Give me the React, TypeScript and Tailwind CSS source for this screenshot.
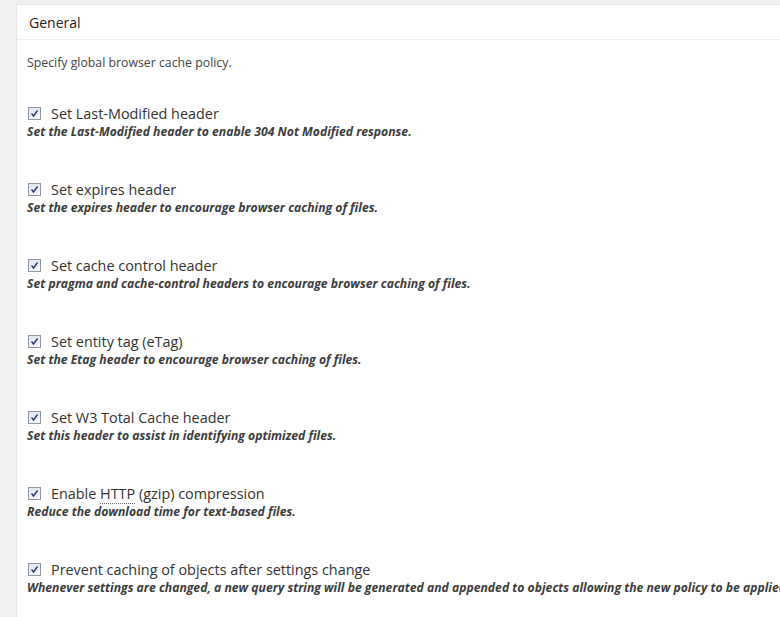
import React from "react";

type Option = { label: React.ReactNode; note: string };

const options: Option[] = [
  { label: "Set Last-Modified header", note: "Set the Last-Modified header to enable 304 Not Modified response." },
  { label: "Set expires header", note: "Set the expires header to encourage browser caching of files." },
  { label: "Set cache control header", note: "Set pragma and cache-control headers to encourage browser caching of files." },
  { label: "Set entity tag (eTag)", note: "Set the Etag header to encourage browser caching of files." },
  { label: "Set W3 Total Cache header", note: "Set this header to assist in identifying optimized files." },
  {
    label: (
      <>
        Enable <abbr className="no-underline border-b border-dotted border-[#666]" title="Hypertext Transfer Protocol">HTTP</abbr> (gzip) compression
      </>
    ),
    note: "Reduce the download time for text-based files.",
  },
  {
    label: "Prevent caching of objects after settings change",
    note: "Whenever settings are changed, a new query string will be generated and appended to objects allowing the new policy to be applied.",
  },
];

function Check() {
  return (
    <svg width="13" height="13" viewBox="0 0 13 13" className="shrink-0">
      <defs>
        <linearGradient id="cbg" x1="0" y1="0" x2="0" y2="1">
          <stop offset="0" stopColor="#dfe6f2" />
          <stop offset="1" stopColor="#f4f6fa" />
        </linearGradient>
      </defs>
      <rect x="0.5" y="0.5" width="12" height="12" fill="url(#cbg)" stroke="#8e96a3" />
      <path d="M3.5 6.5 L5.5 9 L9.5 3.5" fill="none" stroke="#2a3a66" strokeWidth="1.4" />
    </svg>
  );
}

export default function App() {
  return (
    <div
      className="h-[617px] w-[780px] overflow-hidden bg-[#f1f1f1] pl-[16px] pt-[4px]"
      style={{ fontFamily: '"Open Sans", sans-serif' }}
    >
      <div className="h-[700px] w-[820px] border border-[#e5e5e5] bg-white">
        <div className="flex h-[35px] items-center border-b border-[#eeeeee] px-[12px] text-[14px] text-[#222]">
          General
        </div>
        <div className="px-[10px]">
          <p className="pt-[13px] text-[12.3px] leading-[20px] text-[#444]">Specify global browser cache policy.</p>
          <div className="mt-[31px] flex flex-col gap-[39px]">
            {options.map((o, i) => (
              <div key={i}>
                <label className="flex h-[19px] items-center pl-[1px] text-[14.4px] leading-[19px] text-[#333]">
                  <Check />
                  <span className="ml-[10px]">{o.label}</span>
                </label>
                <div className="whitespace-nowrap text-[12.2px] font-bold italic leading-[18px] text-[#3c3c3c]">
                  {o.note}
                </div>
              </div>
            ))}
          </div>
        </div>
      </div>
    </div>
  );
}
